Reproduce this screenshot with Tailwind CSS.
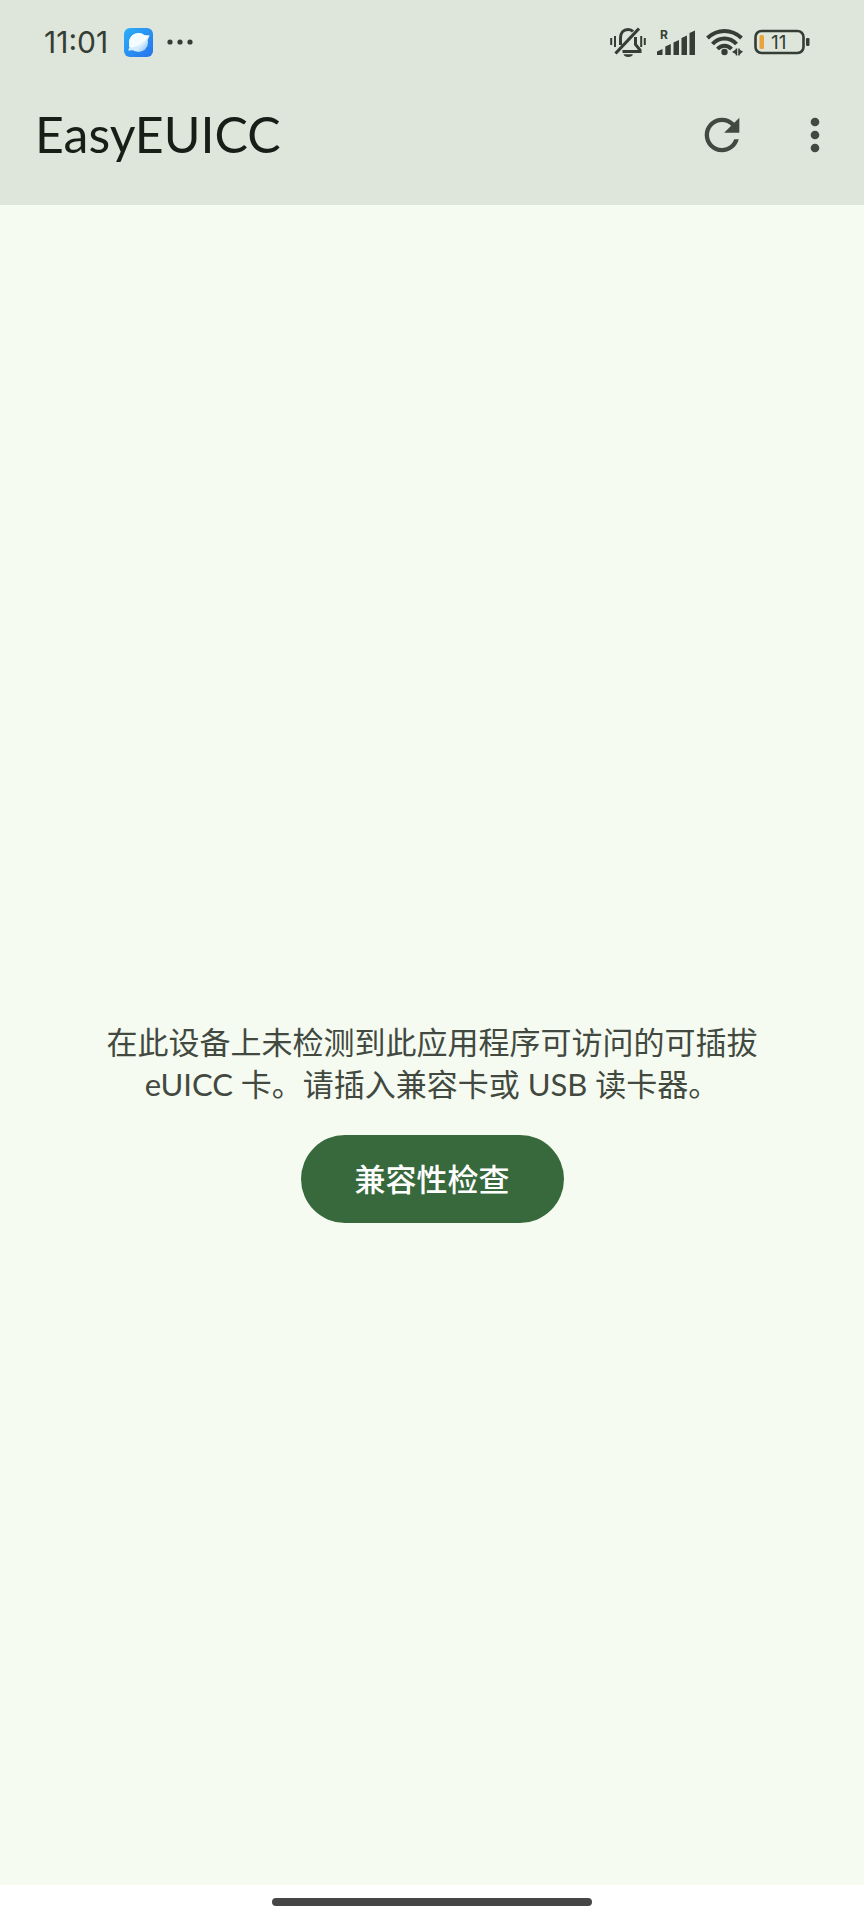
<!DOCTYPE html>
<html lang="zh-CN">
<head>
  <meta charset="UTF-8" />
  <meta name="viewport" content="width=device-width, initial-scale=1.0"/>
  <title>EasyEUICC</title>
  <script src="https://cdn.jsdelivr.net/npm/@tailwindcss/browser@4"></script>
</head>
<body class="flex min-h-screen flex-col bg-[#f5fbf0] font-['Lato','Noto_Sans_CJK_SC',sans-serif]">

  <header class="bg-[#dee5da] pb-7">

    <!-- Status bar -->
    <div class="flex h-[84px] items-center justify-between pr-[54px] pl-11 text-[#353e34]">
      <div class="flex items-center">
        <span class="font-['Inter',sans-serif] text-[30px] leading-none">11:01</span>
        <svg class="ml-4 size-[29px]" viewBox="0 0 29 29" aria-hidden="true">
          <defs>
            <linearGradient id="tile" x1="0" y1="0" x2="1" y2="1">
              <stop offset="0" stop-color="#2bb0f8"/>
              <stop offset="1" stop-color="#2672ec"/>
            </linearGradient>
            <linearGradient id="planet" x1="0" y1="0" x2="1" y2="1">
              <stop offset="0.5" stop-color="#f4fcff"/>
              <stop offset="1" stop-color="#7cc0fa"/>
            </linearGradient>
          </defs>
          <rect width="29" height="29" rx="6" fill="url(#tile)"/>
          <circle cx="14.500" cy="14.500" r="9.500" fill="url(#planet)"/>
          <path d="M20 8.500 25.500 7.500Q23.500 14 17.500 18.500T4 22.500L6.500 17Q14 19 20 8.500Z" fill="#d3edfe"/>
          <path d="M5.500 12Q8 5 14.500 5 18 5 20 7L25.500 7.500Q21.500 13.500 15.500 17T5 19Z" fill="#f4fcff"/>
        </svg>
        <svg class="ml-3.5 h-[6px] w-[26px]" viewBox="0 0 26 6" fill="currentColor" aria-hidden="true">
          <circle cx="3" cy="3" r="2.600"/><circle cx="13" cy="3" r="2.600"/><circle cx="23" cy="3" r="2.600"/>
        </svg>
      </div>

      <div class="flex items-center gap-[11px]">
        <!-- Muted bell -->
        <svg class="h-[30px] w-9" viewBox="0 0 36 30" fill="none" stroke="currentColor" stroke-width="3" aria-hidden="true">
          <path d="M10.500 18V11C10.500 5.500 13.500 2.500 18 2.500 20.500 2.500 22 3.300 23 4.500"/>
          <path d="M25.500 10V17.500L30 23V24.500H12.500"/>
          <path d="M5.500 26.500 29 1.500" stroke-width="3.200"/>
          <path d="M13.500 27.300H23Q22 30 18.200 30T13.500 27.300Z" fill="currentColor" stroke="none"/>
          <path d="M1.200 11V18M5 9V20M31.200 9V20M34.800 11V18" stroke-width="2"/>
        </svg>
        <!-- Signal -->
        <svg class="h-[30px] w-[38px]" viewBox="0 0 38 30" fill="currentColor" aria-hidden="true">
          <text x="3" y="12" font-size="12" font-weight="700" font-family="Inter, sans-serif">R</text>
          <path d="M0 24.500 5.500 22V28H0ZM8.300 19.500 13.800 17V28H8.300ZM16.500 15.500 22 13V28H16.500ZM24.500 11 30 8.500V28H24.500ZM32.500 6 38 3.500V28H32.500Z"/>
        </svg>
        <!-- Wi-Fi -->
        <svg class="h-[28px] w-[37px]" viewBox="0 0 37 28" aria-hidden="true">
          <g fill="none" stroke="currentColor" stroke-width="4">
            <path d="M1.500 10Q9 3 18.500 3T35.500 10"/>
            <path d="M6.500 16Q11.500 10.500 18.500 10.500T30.500 16"/>
            <path d="M11.500 21Q14.500 17.800 18.500 17.800T25.500 21"/>
          </g>
          <circle cx="18.500" cy="24" r="3.200" fill="currentColor"/>
          <path d="M30.500 20.500V27.500M33 27.500V20.500" stroke="currentColor" stroke-width="1.500"/>
          <path d="M30.500 21V26.500L26 24ZM33 21.500V27L37 23.500Z" fill="currentColor"/>
        </svg>
        <!-- Battery -->
        <svg class="h-[26px] w-[56px]" viewBox="0 0 56 26" aria-hidden="true">
          <rect x="1.500" y="2" width="48" height="22" rx="6" fill="none" stroke="currentColor" stroke-width="2.600"/>
          <rect x="5.500" y="6" width="4.500" height="14" rx="1.500" fill="#eaa23c"/>
          <rect x="52" y="9" width="3.500" height="8" rx="1.200" fill="currentColor"/>
          <text x="17" y="20" font-size="19" font-weight="400" font-family="Inter, sans-serif" fill="currentColor">11</text>
        </svg>
      </div>
    </div>

    <!-- App bar -->
    <div class="flex items-center pt-2 pr-[23px] pl-[35px]">
      <h1 class="flex-1 text-[50px] leading-[85px] text-[#171d17]">EasyEUICC</h1>
      <div class="flex items-center gap-[41px] text-[#424940]">
        <button type="button" aria-label="刷新">
          <svg class="size-[52px]" viewBox="0 0 24 24" fill="currentColor">
            <path d="M17.650 6.350C16.200 4.900 14.210 4 12 4c-4.420 0-7.990 3.580-7.990 8s3.570 8 7.990 8c3.730 0 6.840-2.550 7.730-6h-2.080c-.820 2.330-3.040 4-5.650 4-3.310 0-6-2.690-6-6s2.690-6 6-6c1.660 0 3.140.690 4.220 1.780L13 11h7V4l-2.350 2.350z"/>
          </svg>
        </button>
        <button type="button" aria-label="更多选项">
          <svg class="size-[52px]" viewBox="0 0 24 24" fill="currentColor">
            <path d="M12 8c1.100 0 2-.9 2-2s-.9-2-2-2-2 .9-2 2 .9 2 2 2zm0 2c-1.100 0-2 .9-2 2s.9 2 2 2 2-.9 2-2-.9-2-2-2zm0 6c-1.100 0-2 .9-2 2s.9 2 2 2 2-.9 2-2-.9-2-2-2z"/>
          </svg>
        </button>
      </div>
    </div>
  </header>

  <main class="flex flex-1 flex-col items-center justify-center px-24 pt-[154px]">
    <p class="text-center text-[31px] leading-[42px] text-[#424940]">在此设备上未检测到此应用程序可访问的可插拔 eUICC 卡。请插入兼容卡或 USB 读卡器。</p>
    <button type="button" class="mt-[30px] h-[88px] rounded-full bg-[#38693d] px-[54px] text-[31px] font-medium text-white">兼容性检查</button>
  </main>

  <!-- Gesture bar -->
  <div class="flex h-[35px] justify-center bg-white pt-[13px]">
    <div class="h-2 w-80 rounded-full bg-[#464646]"></div>
  </div>

</body>
</html>
